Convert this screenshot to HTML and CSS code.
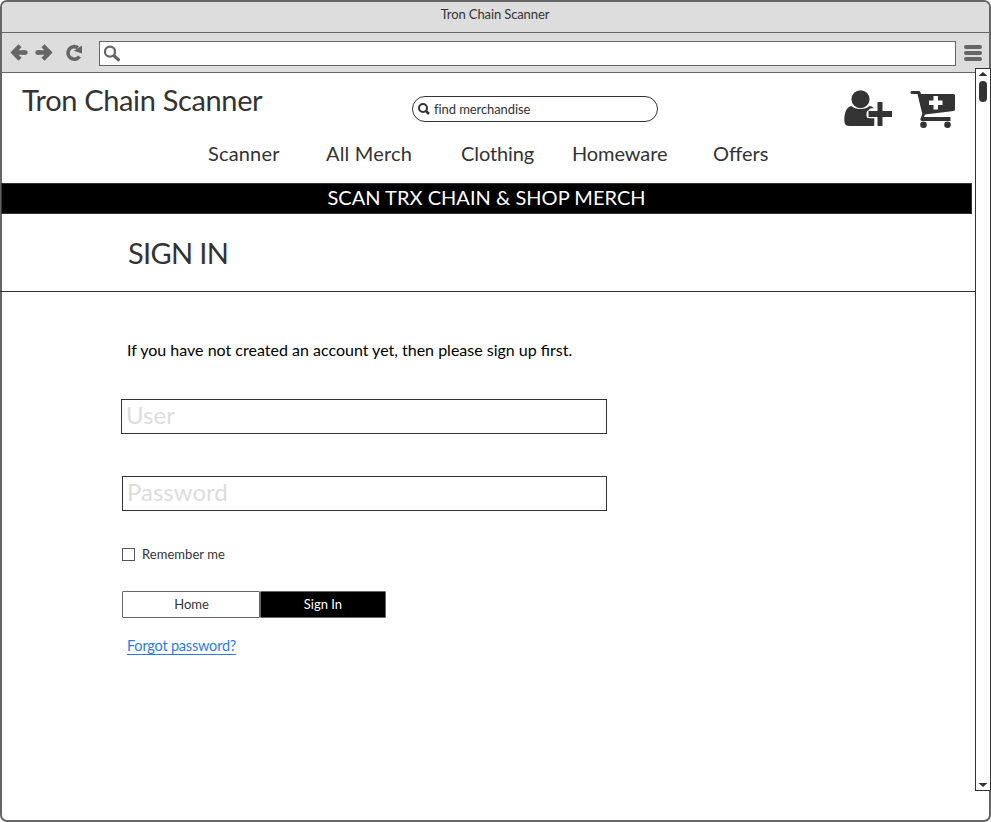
FILE: index.html
```html
<!DOCTYPE html>
<html lang="en">
<head>
<meta charset="utf-8">
<title>Tron Chain Scanner</title>
<link rel="stylesheet" href="styles.css">
</head>
<body>
<div class="window">
  <div class="titlebar"><span>Tron Chain Scanner</span></div>
  <div class="toolbar">
    <svg class="nav-icons" width="97" height="39" viewBox="2 33 97 39">
      <g fill="none" stroke="#666" stroke-width="4.400">
        <path d="M20 45.800L13.500 52.500L20 59.200M14 52.500H25.500"/>
        <path d="M43 45.800L49.500 52.500L43 59.200M49 52.500H37.500"/>
        <path d="M79.500 56.500A6.300 6.300 0 1 1 78 47.800" stroke-width="3.600"/>
      </g>
      <path d="M24 52.500H25.500M38 52.500H37.500" stroke="#666" stroke-width="4.400" stroke-linecap="round"/>
      <path d="M82 45.500V53.500L73.800 50.800Z" fill="#666"/>
    </svg>
    <div class="address">
      <svg width="20" height="20" viewBox="102 43 20 20" fill="none" stroke="#666">
        <circle cx="110" cy="50.700" r="5" stroke-width="2.300"/>
        <path d="M114 54.700L118.500 58.700" stroke-width="3.200" stroke-linecap="round"/>
      </svg>
    </div>
    <div class="menu"><i></i><i></i><i></i></div>
  </div>
  <header class="header">
    <h1 class="brand">Tron Chain Scanner</h1>
    <div class="search">
      <svg width="14" height="14" viewBox="0 0 14 14" fill="none" stroke="#333">
        <circle cx="6" cy="6" r="4" stroke-width="2"/>
        <path d="M9 9L12 12" stroke-width="2.500"/>
      </svg>
      <span>find merchandise</span>
    </div>
    <svg class="actions" width="116" height="42" viewBox="842 88 116 42" fill="#333">
      <circle cx="860.500" cy="99.200" r="9"/>
      <path d="M851.500 106C855 110 866 110 869.500 106C871.500 106.200 873 107.200 873.800 108.300H871.500Q869 108.300 869 110.300H868.500Q866.500 110.800 866.500 113V115.500Q866.500 118.300 869.500 118.300H874.300V125.500Q873.500 126 872 126H849.500Q844.300 126 844.300 120.500C844.300 113 846.500 106.500 851.500 106Z"/>
      <path d="M877.500 102H882.500V111H892V117H882.500V126H877.500V117H868.500V111H877.500Z"/>
      <path d="M911.500 91H919Q920 91 920.500 92.200L921 94H953.500Q955 94 955 95.500V109.500Q955 110.800 953.500 111L925 114.500L924 117H950.500V121H922Q920 121 920.500 118.500L922.300 114L917.500 94H912Q910.500 94 910.500 92.500Q910.500 91 911.500 91Z"/>
      <path d="M933.500 96H938V100.500H942.500V105H938V109.500H933.500V105H929V100.500H933.500Z" fill="#fff"/>
      <circle cx="923.500" cy="124.800" r="3.300"/><circle cx="947.500" cy="124.800" r="3.300"/>
    </svg>
  </header>
  <nav class="nav"><a class="wide">Scanner</a><a class="wide">All Merch</a><a class="tight">Clothing</a><a class="tight">Homeware</a><a>Offers</a></nav>
  <div class="banner"><span>SCAN TRX CHAIN &amp; SHOP MERCH</span></div>
  <div class="heading"><h2>SIGN IN</h2></div>
  <main class="form">
    <p class="hint">If you have not created an account yet, then please sign up first.</p>
    <div class="field user"><span>User</span></div>
    <div class="field password"><span>Password</span></div>
    <div class="remember"><i class="box"></i><span>Remember me</span></div>
    <div class="buttons"><div class="btn home"><span>Home</span></div><div class="btn submit"><span>Sign In</span></div></div>
    <a class="forgot">Forgot password?</a>
  </main>
  <div class="scrollbar">
    <svg width="14" height="10" viewBox="0 0 14 10"><path d="M7 3L11.500 7H2.500Z" fill="#333"/></svg>
    <i class="thumb"></i>
    <svg class="down" width="14" height="10" viewBox="0 0 14 10"><path d="M2.500 3H11.500L7 7Z" fill="#333"/></svg>
  </div>
</div>
</body>
</html>
```
FILE: styles.css
```css
* { box-sizing: border-box; }
body { margin: 0; background: #fff; font-family: Lato, sans-serif; color: #333; }
h1, h2, p { margin: 0; font-weight: 400; }
svg { display: block; flex: none; }
span { white-space: nowrap; }
.window { position: relative; width: 991px; height: 822px; border: 2px solid #666; border-radius: 7px; }
.titlebar { height: 31px; background: #ddd; border-bottom: 1px solid #666; border-radius: 5px 5px 0 0; text-align: center; font-size: 13px; line-height: 24px; letter-spacing: -0.11px; padding-right: 1px; }
.toolbar { height: 40px; background: #ddd; border-bottom: 1px solid #666; display: flex; align-items: center; }
.address { width: 857px; height: 25px; margin-top: 1px; background: #fff; border: 1px solid #666; padding: 2px; }
.menu { margin: 1px 0 0 8px; display: flex; flex-direction: column; gap: 2px; }
.menu i { width: 18px; height: 4px; border-radius: 2px; background: #666; }
.header { height: 67px; display: flex; align-items: flex-start; }
.brand { width: 390px; padding: 10px 0 0 20px; font-size: 29px; line-height: 34px; letter-spacing: -0.35px; }
.search { width: 246px; height: 26px; margin: 23px 184px 0 20px; border: 1px solid #333; border-radius: 13px; display: flex; align-items: center; gap: 3px; padding-left: 4px; font-size: 13px; line-height: 24px; letter-spacing: -0.08px; font-variant-ligatures: common-ligatures; }
.actions { margin-top: 15px; }
.nav { height: 43px; display: grid; grid-template-columns: 118px 135px 111px 141px 100px; padding: 0 0 0 206px; font-size: 20px; line-height: 26px; }
.wide { letter-spacing: 0.17px; }
.tight { letter-spacing: -0.1px; }
.banner { width: 971px; height: 31px; margin-left: -1px; background: #000; border: 1px solid #333; color: #fff; text-align: center; font-size: 20px; line-height: 27px; letter-spacing: 0.03px; }
.heading { height: 78px; width: 975px; margin-left: -2px; padding: 21px 0 0 128px; border-bottom: 1px solid #333; }
.heading h2 { font-size: 29px; line-height: 36px; letter-spacing: -0.65px; }
.form { padding: 48px 0 0 119px; display: flex; flex-direction: column; align-items: flex-start; }
.hint { padding-left: 6px; color: #000; font-size: 16px; line-height: 20px; white-space: nowrap; }
.field { width: 486px; height: 35px; border: 1px solid #333; padding-left: 4px; font-size: 24px; line-height: 30px; color: #ddd; }
.user { margin-top: 39px; }
.password { width: 485px; margin: 42px 0 0 1px; }
.remember { height: 20px; margin: 33px 0 0 1px; display: flex; align-items: center; gap: 7px; font-size: 13px; line-height: 20px; letter-spacing: 0.05px; }
.box { width: 13px; height: 13px; border: 1px solid #555; }
.buttons { display: flex; margin: 27px 0 0 1px; font-size: 13px; line-height: 25px; text-align: center; }
.btn { height: 27px; border: 1px solid #666; border-radius: 1px; }
.home { width: 138px; padding-left: 1px; }
.submit { width: 126px; background: #000; color: #fff; }
.forgot { margin: 19px 0 0 6px; font-size: 14.5px; line-height: 17px; height: 18px; letter-spacing: -0.2px; color: #2c7be5; border-bottom: 1px solid #2c7be5; }
.scrollbar { position: absolute; left: 973px; top: 66px; width: 16px; height: 723px; background: #fff; border: 1px solid #333; display: flex; flex-direction: column; }
.thumb { width: 8px; height: 21px; margin: 2px 0 0 3px; border-radius: 4px; background: #333; }
.down { margin-top: auto; }
```
